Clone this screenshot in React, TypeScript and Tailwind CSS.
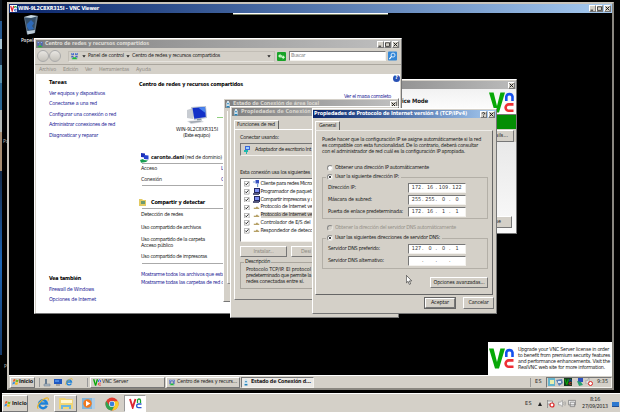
import { useLayoutEffect, useRef, type ReactNode } from "react";

/* One line of text; `w` is the width the line is tracked to fill. */
function T({ w, className = "", children }: { w?: number; className?: string; children: ReactNode }) {
  const ref = useRef<HTMLSpanElement>(null);
  useLayoutEffect(() => {
    const el = ref.current;
    if (!el || !w) return;
    el.style.letterSpacing = "0px";
    const n = (el.textContent || "").length;
    el.style.letterSpacing = `${(w - el.getBoundingClientRect().width) / n}px`;
  }, [w]);
  return (
    <span ref={ref} className={`block w-max shrink-0 whitespace-pre leading-[6px] ${className}`}>
      {children}
    </span>
  );
}

const raised = "border border-t-white border-l-white border-r-[#777] border-b-[#777] bg-[#d4d0c8]";
const sunken = "border border-t-[#777] border-l-[#777] border-r-[#f4f2ee] border-b-[#f4f2ee]";

function CapBtn({ kind }: { kind: "min" | "max" | "close" | "help" }) {
  return (
    <div className={`h-[7px] w-[7px] shrink-0 ${raised}`}>
      <svg viewBox="0 0 5 5" className="block h-[5px] w-[5px]" fill="none" stroke="#111" strokeWidth=".9">
        {kind === "min" && <path d="M.5 4.2h2.6" />}
        {kind === "max" && <path d="M.5.8h4v3.6h-4z" strokeWidth=".7" />}
        {kind === "close" && <path d="M.6.6l3.8 3.8M4.4.6L.6 4.4" />}
        {kind === "help" && <path d="M1.2 1.4C1.3.2 3.9.3 3.7 1.6 3.6 2.3 2.5 2.2 2.5 3.3M2.5 4v.8" />}
      </svg>
    </div>
  );
}

function VncLogo({ className }: { className: string }) {
  return (
    <svg viewBox="0 0 25 21" className={className} fill="none">
      <path d="M0 .5h4.600L8 14 11.400.5H16L10 20.500H6z" fill="#08a808" />
      <path d="M17.300 9V4.500a3.200 3.200 0 0 1 6.200 0V9" stroke="#1450ee" strokeWidth="2.600" />
      <path d="M24.500 12.400h-4.700a3.200 3.200 0 0 0 0 6.400h4.700" stroke="#ee2f35" strokeWidth="2.600" />
    </svg>
  );
}

function NetIcon({ className }: { className: string }) {
  return (
    <svg viewBox="0 0 7 7" className={className}>
      <path d="M.3.4h2.700v2.100H.3zM4 .4h2.700v2.100H4zM.3 3.300h2.200v1.600H.3zM4.400 3.300h2.200v1.600H4.400z" fill="#4260be" />
      <path d="M.8.8h1.500v1H.8zM4.500.8H6v1H4.500z" fill="#abc6f5" />
      <path d="M2 4.700h3v1h1.200v1H.8v-1H2z" fill="#1cb83e" />
    </svg>
  );
}

function Phone({ className }: { className: string }) {
  return (
    <svg viewBox="0 0 4 7" className={className}>
      <path d="M1 0h2v1.500h.7v4.800H.3V1.500H1z" fill="#cfe3ee" />
      <path d="M1.300 2h1.400v1.200H1.300zM.6 5h2.800v1.500H.6z" fill="#2683b8" />
    </svg>
  );
}

function Flag({ className }: { className: string }) {
  return (
    <svg viewBox="0 0 8 8" className={className}>
      <path d="M1.500 1.500Q3-.2 4 1L3.500 3.500Q2.500 2.700 1 4z" fill="#f15a24" />
      <path d="M4.500 1.200Q6 2.200 7.600 1L7 3.600Q5.500 4.500 4 3.600z" fill="#75b82c" />
      <path d="M.9 4.500Q2.200 3.400 3.400 4L2.900 6.500Q1.700 5.800.3 7z" fill="#3a8ed8" />
      <path d="M3.900 4.200Q5.400 5.200 6.900 4.200L6.300 6.800Q5 7.700 3.400 6.600z" fill="#f9bd16" />
    </svg>
  );
}

function IE({ className }: { className: string }) {
  return (
    <svg viewBox="0 0 14 14" className={className} fill="none">
      <path d="M11 9.500A4.300 4.300 0 1 1 11.300 7H4" stroke="#1f83d8" strokeWidth="2.500" />
      <path d="M2 12.500C-1 11 4 3.500 9 1.500c4-1.500 4.300.3 3.400 2.400" stroke="#ecb72c" strokeWidth="1.200" />
    </svg>
  );
}

function Computer({ className }: { className: string }) {
  return (
    <svg viewBox="0 0 22 18" className={className}>
      <path d="M1 4l6-2v11l-6-1z" fill="#c8ccd2" />
      <path d="M5 1l15-1 1 12-13 2z" fill="#b9c2cf" />
      <path d="M6.500 2l12.500-1 .8 10-11.500 1.700z" fill="#1230c8" />
      <path d="M12 1.500l7-.5.500 6z" fill="#4a84ee" />
      <path d="M11 13l4-.5 1 2-5 .5z" fill="#8894a4" />
      <path d="M1 15l14-1 3 2-13 2z" fill="#d3d7dc" />
      <path d="M3 15.500l11-.7 1.500 1L5 17z" fill="#a0a7b0" />
    </svg>
  );
}

function DownArrow({ className }: { className: string }) {
  return (
    <svg viewBox="0 0 4 3" className={`h-[3px] w-[4px] shrink-0 ${className}`}>
      <path d="M.3.200h3.400L2 2.500z" fill="#222" />
    </svg>
  );
}

function Radio({ on, off }: { on?: boolean; off?: boolean }) {
  return (
    <div
      className={`flex h-[6px] w-[6px] shrink-0 items-center justify-center rounded-full border border-t-[#888] border-l-[#888] border-r-[#e4e2dd] border-b-[#e4e2dd] ${off ? "bg-[#d4d0c8]" : "bg-white"}`}
    >
      {on && <div className="h-[2px] w-[2px] rounded-full bg-black" />}
    </div>
  );
}

function IpField({ parts }: { parts: string[] }) {
  return (
    <div className={`flex h-[10px] w-[58px] items-center bg-white pl-[2px] text-[5.400px] text-[#333] ${sunken}`}>
      {parts.map((p, i) => (
        <div key={i} className="flex w-[14px] items-center">
          <span className="w-[11px] text-center leading-[6px]">{p}</span>
          {i < 3 && <span className="leading-[6px]">.</span>}
        </div>
      ))}
    </div>
  );
}

function IpRow({ label, w, parts }: { label: string; w: number; parts: string[] }) {
  return (
    <div className="flex h-[12px] items-center justify-between pl-[5px] pr-[21px]">
      <T w={w}>{label}</T>
      <IpField parts={parts} />
    </div>
  );
}

function NetworkCenter() {
  return (
    <div className={`absolute left-[34px] top-[38px] flex h-[276px] w-[368px] flex-col ${raised}`}>
      <div className="mx-[1px] mt-[1px] flex h-[8px] shrink-0 items-center bg-linear-to-r from-[#808080] to-[#c0c0c0] pl-[1px] pr-[1px]">
        <NetIcon className="mr-[2px] h-[7px] w-[6px]" />
        <T w={104} className="font-bold text-[#dedbd5]">Centro de redes y recursos compartidos</T>
        <div className="ml-auto flex">
          <CapBtn kind="min" />
          <CapBtn kind="max" />
          <div className="w-[1px]" />
          <CapBtn kind="close" />
        </div>
      </div>
      <div className="flex h-[17px] shrink-0 items-center border-b border-[#aaa69e] pl-[2px] pr-[2px]">
        <div className="h-[12px] w-[12px] shrink-0 rounded-full border border-[#aaa] bg-linear-to-b from-[#e8e6e2] to-[#c4c1ba]" />
        <div className="h-[12px] w-[12px] shrink-0 rounded-full border border-[#aaa] bg-linear-to-b from-[#e8e6e2] to-[#c4c1ba]" />
        <div className="ml-[7px] flex h-[11px] w-[207px] shrink-0 items-center border border-[#c2beb6] border-b-[#e6e4df]">
          <NetIcon className="ml-[2px] mr-[4px] h-[8px] w-[7px] shrink-0" />
          <DownArrow className="mr-[2px]" />
          <T w={36}>Panel de control</T>
          <DownArrow className="mx-[2px]" />
          <T w={88}>Centro de redes y recursos compartidos</T>
          <DownArrow className="ml-auto mr-[3px]" />
        </div>
        <svg viewBox="0 0 9 9" className="ml-[2px] h-[9px] w-[9px] shrink-0">
          <rect width="9" height="9" rx="1" fill="#18a328" />
          <path d="M1 4L3.500 1.700v1.500H5v1.600H3.500v1.500zM8 5.200L5.700 7.500V6H4.500V4.500h1.200V3z" fill="#cff8ca" />
        </svg>
        <div className={`ml-[3px] flex h-[10px] w-[97px] shrink-0 items-center bg-white pl-[1px] ${sunken}`}>
          <T w={14} className="text-[#888]">Buscar</T>
        </div>
        <svg viewBox="0 0 10 10" className="ml-[2px] h-[10px] w-[9px] shrink-0">
          <rect width="10" height="10" rx="1" fill="#3587d6" />
          <circle cx="5.600" cy="4" r="2.200" fill="none" stroke="#e4f2ff" />
          <path d="M4 5.500L1.500 8.500" stroke="#fff" strokeWidth="1.300" />
        </svg>
      </div>
      <div className="flex h-[9px] shrink-0 items-center pl-[4px] text-[#918d86]">
        <T w={17} className="mr-[7px]">Archivo</T>
        <T w={15} className="mr-[7px]">Edición</T>
        <T w={7} className="mr-[7px]">Ver</T>
        <T w={30} className="mr-[7px]">Herramientas</T>
        <T w={15}>Ayuda</T>
      </div>
      <div className="mx-[1px] flex min-h-0 flex-1 overflow-hidden bg-white">
        <div className="w-[103px] shrink-0 pl-[13px] pt-[6px] text-[#242496]">
          <T w={18} className="mb-[4.500px] font-bold text-black">Tareas</T>
          <T w={56} className="mb-[4.600px]">Ver equipos y dispositivos</T>
          <T w={48} className="mb-[4.600px]">Conectarse a una red</T>
          <T w={67} className="mb-[4.600px]">Configurar una conexión o red</T>
          <T w={66} className="mb-[4.600px]">Administrar conexiones de red</T>
          <T w={49}>Diagnosticar y reparar</T>
          <T w={32} className="mt-[137px] font-bold text-black">Vea también</T>
          <T w={45} className="mt-[5px]">Firewall de Windows</T>
          <T w={47} className="mt-[4.500px]">Opciones de Internet</T>
        </div>
        <div className="w-[262px] shrink-0">
          <div className="flex h-[7px] justify-end pt-[1px]">
            <div className="mr-[1px] h-[7px] w-[7px] shrink-0 rounded-full bg-[#2851b5] text-center text-[5.500px] font-bold leading-[7px] text-white">?</div>
          </div>
          <T w={104} className="mt-[1px] font-bold text-black">Centro de redes y recursos compartidos</T>
          <T w={47} className="ml-[205px] mt-[6px] text-[#242496]">Ver el mapa completo</T>
          <div className="flex items-center pl-[47px] pt-[6px]">
            <Computer className="h-[18px] w-[22px]" />
            <div className="ml-[9px] mt-[5px] h-[1px] w-[30px] bg-[#91cf80]" />
          </div>
          <T w={42} className="ml-[37px] mt-[2.500px]">WIN-9L2C8XR315I</T>
          <T w={27} className="ml-[44px] mt-[0.500px]">(Este equipo)</T>
          <div className="mt-[13px] flex h-[11px] items-center">
            <svg viewBox="0 0 10 10" className="h-[10px] w-[10px]">
              <path d="M2 0l4 .5v4L2 4z" fill="#1a2fb8" />
              <path d="M5 2l4.500.5v4L5 6z" fill="#2443d0" />
              <path d="M1 7l3-1 1 1 4 .5-2 1.500-5 .7z" fill="#189d50" />
            </svg>
            <T w={33} className="ml-[2px] font-bold">caronte.dani</T>
            <T w={37} className="ml-[1px]">(red de dominio)</T>
          </div>
          <div className="ml-[3px] h-[1px] bg-[#aaa]" />
          <div className="ml-[2px] mt-[2px] flex">
            <div className="w-[80px]"><T w={16}>Acceso</T></div>
            <T w={38} className="text-[#242496]">Local e Internet</T>
          </div>
          <div className="ml-[2px] mt-[5px] flex">
            <div className="w-[80px]"><T w={21}>Conexión</T></div>
            <T w={21} className="text-[#242496]">Conexión</T>
          </div>
          <div className="ml-[3px] mt-[2px] h-[1px] bg-[#aaa]" />
          <div className="mt-[11px] flex h-[11px] items-center">
            <svg viewBox="0 0 7 8" className="mb-[2px] h-[8px] w-[7px]">
              <path d="M0 1h3l1 1h3v6H0z" fill="#e3ca62" />
              <path d="M2 3h4v3H2z" fill="#6d9b70" />
            </svg>
            <T w={54} className="ml-[5px] mt-[1px] font-bold text-black">Compartir y detectar</T>
          </div>
          <div className="ml-[3px] h-[1px] bg-[#aaa]" />
          <div className="ml-[2px]">
            <T w={42} className="mt-[3px]">Detección de redes</T>
            <T w={60} className="mt-[6.500px]">Uso compartido de archivos</T>
            <T w={64} className="mt-[6.500px]">Uso compartido de la carpeta</T>
            <T w={32}>Acceso público</T>
            <T w={66} className="mt-[4.500px]">Uso compartido de impresoras</T>
          </div>
          <div className="ml-[3px] mt-[3.500px] h-[1px] bg-[#aaa]" />
          <T w={86} className="ml-[2px] mt-[8px] text-[#242496]">Mostrarme todos los archivos que estoy</T>
          <T w={97} className="ml-[2px] mt-[2.300px] text-[#242496]">Mostrarme todas las carpetas de red compar</T>
        </div>
      </div>
    </div>
  );
}

function VncServerWindow() {
  return (
    <div className={`absolute left-[340px] top-[79px] flex h-[155px] w-[177px] flex-col ${raised}`}>
      <div className="mt-[1px] flex h-[8px] shrink-0 items-center justify-end bg-linear-to-r from-[#808080] to-[#bbb] pr-[1px]">
        <CapBtn kind="close" />
      </div>
      <div className="flex h-[25px] shrink-0 items-start justify-between bg-linear-to-b from-[#f2f2f2] to-white pl-[48px] pr-[2px] pt-[3px]">
        <T w={39} className="mt-[7px] text-[6px] font-bold">Service Mode</T>
        <VncLogo className="h-[21px] w-[25px]" />
      </div>
      <div className="h-[15px] shrink-0 border-t border-[#777] bg-[#048e04]" />
      <div className="flex h-[13px] shrink-0 justify-end pr-[2px] pt-[1px]">
        <div className={`flex h-[12px] w-[34px] items-center justify-end pr-[5px] ${raised}`}><T>Details...</T></div>
      </div>
      <div className="flex flex-1 items-end justify-end bg-linear-to-b from-[#e9e9e9] to-[#fafafa] pb-[5px] pr-[4px]">
        <div className={`flex h-[12px] w-[34px] items-center justify-end pr-[10px] ${raised}`}><T>Close</T></div>
      </div>
    </div>
  );
}

function StatusWindow() {
  return (
    <div className={`absolute left-[223px] top-[98px] flex h-[204px] w-[176px] flex-col ${raised}`}>
      <div className="mx-[1px] mt-[1px] flex h-[8px] shrink-0 items-center bg-linear-to-r from-[#808080] to-[#c0c0c0] pl-[1px]">
        <Phone className="mr-[3px] h-[7px] w-[4px]" />
        <T w={86} className="font-bold text-[#d8d5ce]">Estado de Conexión de área local</T>
        <div className="ml-auto"><CapBtn kind="close" /></div>
      </div>
      <div className="mb-[17px] ml-[3px] mt-[3px] flex-1 border-b border-l border-b-[#888] border-l-white" />
    </div>
  );
}

const components: { label: string; w: number; kind: "client" | "pc" | "proto"; sel?: boolean }[] = [
  { label: "Cliente para redes Micros", w: 53, kind: "client" },
  { label: "Programador de paquet", w: 51, kind: "pc" },
  { label: "Compartir impresoras y a", w: 53, kind: "pc" },
  { label: "Protocolo de Internet ve", w: 52, kind: "proto" },
  { label: "Protocolo de Internet ve", w: 52, kind: "proto", sel: true },
  { label: "Controlador de E/S del", w: 50, kind: "proto" },
  { label: "Respondedor de detecc", w: 52, kind: "proto" },
];

function ItemIcon({ kind }: { kind: "client" | "pc" | "proto" }) {
  return (
    <svg viewBox="0 0 7 7" className="ml-[3px] mr-[1px] h-[7px] w-[7px] shrink-0">
      {kind === "client" && (
        <>
          <path d="M2.500 0h3.500v3.500H2.500z" fill="#344fc0" />
          <path d="M0 1.500h2v1H0zM4 4h1.200v3H4z" fill="#77a0d0" />
        </>
      )}
      {kind === "pc" && (
        <>
          <path d="M1 0h6v6H1z" fill="#24285e" />
          <path d="M2 1h4v3H2z" fill="#7b8cf0" />
          <path d="M0 5h6v2H0z" fill="#57597d" />
        </>
      )}
      {kind === "proto" && <path d="M.8 4.800h5.400v-1H4.600V2.700H3.300v1.100H.8z" fill="#a08438" />}
    </svg>
  );
}

function ConnectionProps() {
  return (
    <div className={`absolute left-[230px] top-[106px] flex h-[212px] w-[169px] flex-col overflow-hidden ${raised}`}>
      <div className="mx-[1px] mt-[1px] flex h-[8px] shrink-0 items-center bg-linear-to-r from-[#808080] to-[#c0c0c0] pl-[2px]">
        <Phone className="mr-[3px] h-[7px] w-[4px]" />
        <T w={75} className="font-bold text-[#d8d5ce]">Propiedades de Conexión d</T>
      </div>
      <div className="ml-[3px] mt-[4px] flex h-[9px] w-[45px] shrink-0 items-center rounded-t-[1px] border-l border-r border-t border-l-white border-r-[#666] border-t-white pl-[2px]">
        <T w={38}>Funciones de red</T>
      </div>
      <div className="ml-[3px] mr-[3px] h-[171px] shrink-0 border-b border-l border-t border-b-[#777] border-l-white border-t-white pl-[5px] pt-[5px]">
        <T w={39}>Conectar usando:</T>
        <div className={`mt-[2px] flex h-[13px] w-[150px] items-center pl-[3px] ${sunken}`}>
          <svg viewBox="0 0 7 8" className="mr-[4px] h-[8px] w-[7px]">
            <path d="M1 0h5v4H1z" fill="#3c68d8" />
            <path d="M2 1h3v2H2z" fill="#99d0ff" />
            <path d="M0 4h4v2H3v2H2V6H0z" fill="#1fb8ac" />
          </svg>
          <T w={56}>Adaptador de escritorio Int</T>
        </div>
        <T w={70} className="mt-[14px]">Esta conexión usa los siguientes</T>
        <div className={`mt-[2px] h-[64px] w-[150px] bg-white pl-[3px] pt-[1px] ${sunken}`}>
          {components.map((c, i) => (
            <div key={i} className="flex h-[7.850px] items-center">
              <svg viewBox="0 0 6 6" className="h-[5.500px] w-[5.500px] shrink-0">
                <path d="M.4.400h5.200v5.200H.4z" fill="#fff" stroke="#888" strokeWidth=".7" />
                <path d="M1.300 2.800l1.200 1.300L4.800 1.500" fill="none" stroke="#111" strokeWidth="1" />
              </svg>
              <ItemIcon kind={c.kind} />
              <div className={c.sel ? "bg-[#d4d0c8]" : ""}><T w={c.w}>{c.label}</T></div>
            </div>
          ))}
        </div>
        <div className="mt-[4px] flex gap-[4px] text-[#8d8981]">
          <div className={`flex h-[11px] w-[47px] items-center justify-center ${raised}`}><T w={20}>Instalar...</T></div>
          <div className={`flex h-[11px] w-[47px] items-center pl-[9px] ${raised}`}><T w={10}>Desi</T></div>
        </div>
        <fieldset className="mt-[2px] h-[30px] w-[150px] border border-[#aaa69e] pl-[5px]">
          <legend className="ml-[-2px] px-[1px]"><T w={25}>Descripción</T></legend>
          <T w={65} className="mt-[1.500px]">Protocolo TCP/IP. El protocol</T>
          <T w={65}>predeterminado que permite la</T>
          <T w={58}>redes conectadas entre sí.</T>
        </fieldset>
      </div>
    </div>
  );
}

function IpProps() {
  return (
    <div className={`absolute left-[312px] top-[108px] flex h-[206px] w-[185px] flex-col ${raised}`}>
      <div className="mt-[1px] flex h-[8px] shrink-0 items-center bg-linear-to-r from-[#0a246a] to-[#a6caf0] pl-[1px] pr-[1px]">
        <T w={153} className="font-bold text-white">Propiedades de Protocolo de Internet versión 4 (TCP/IPv4)</T>
        <div className="ml-auto flex gap-[1px]"><CapBtn kind="help" /><CapBtn kind="close" /></div>
      </div>
      <div className="ml-[2px] mt-[3px] flex h-[9px] w-[25px] shrink-0 items-center rounded-t-[1px] border-l border-r border-t border-l-white border-r-[#666] border-t-white pl-[3px]">
        <T w={17}>General</T>
      </div>
      <div className="ml-[2px] mr-[3px] h-[165px] shrink-0 border border-b-[#666] border-l-white border-r-[#666] border-t-[#eeece8] pl-[6px] pr-[4px] pt-[6px]">
        <T w={159}>Puede hacer que la configuración IP se asigne automáticamente si la red</T>
        <T w={156}>es compatible con esta funcionalidad. De lo contrario, deberá consultar</T>
        <T w={143}>con el administrador de red cuál es la configuración IP apropiada.</T>
        <div className="mt-[10px] flex items-center gap-[2px] pl-[5px]"><Radio /><T w={94}>Obtener una dirección IP automáticamente</T></div>
        <fieldset className="mt-[3px] h-[45px] border border-[#b3afa7]">
          <legend className="ml-[3px] flex items-center gap-[2px] pl-[1px] pr-[2px]"><Radio on /><T w={64}>Usar la siguiente dirección IP:</T></legend>
          <div className="pt-[2px]">
            <IpRow label="Dirección IP:" w={28} parts={["172", "16", "109", "122"]} />
            <IpRow label="Máscara de subred:" w={44} parts={["255", "255", "0", "0"]} />
            <IpRow label="Puerta de enlace predeterminada:" w={75} parts={["172", "16", "1", "1"]} />
          </div>
        </fieldset>
        <div className="mt-[6px] flex items-center gap-[2px] pl-[5px] text-[#96928a]"><Radio off /><T w={121}>Obtener la dirección del servidor DNS automáticamente</T></div>
        <fieldset className="mt-[4px] h-[34px] border border-[#b3afa7]">
          <legend className="ml-[3px] flex items-center gap-[2px] pl-[1px] pr-[2px]"><Radio on /><T w={105}>Usar las siguientes direcciones de servidor DNS:</T></legend>
          <div className="pt-[2px]">
            <IpRow label="Servidor DNS preferido:" w={52} parts={["127", "0", "0", "1"]} />
            <IpRow label="Servidor DNS alternativo:" w={56} parts={["", "", "", ""]} />
          </div>
        </fieldset>
        <div className="mt-[8px] flex justify-end">
          <div className={`flex h-[11px] w-[58px] items-center justify-center ${raised}`}><T w={51}>Opciones avanzadas...</T></div>
        </div>
      </div>
      <div className="mr-[2px] mt-[2px] flex justify-end gap-[7px]">
        <div className="h-[12px] w-[32px] border border-[#666]"><div className={`flex h-[10px] items-center justify-center ${raised}`}><T w={18}>Aceptar</T></div></div>
        <div className={`flex h-[12px] w-[31px] items-center justify-center ${raised}`}><T w={20}>Cancelar</T></div>
      </div>
    </div>
  );
}

function GuestTaskbar() {
  return (
    <div className="flex h-[13px] shrink-0 items-center border-t border-white bg-[#d4d0c8]">
      <div className={`ml-[1px] flex h-[11px] w-[25px] items-center pl-[1px] ${raised}`}>
        <Flag className="h-[8px] w-[7px]" />
        <T w={14} className="font-bold">Inicio</T>
      </div>
      <div className="ml-[4px] h-[9px] w-[1px] bg-[#999]" />
      <svg viewBox="0 0 8 9" className="ml-[3px] h-[9px] w-[8px]">
        <path d="M2 1h2v5H2z" fill="#667c92" />
        <path d="M1 6h6v2H1z" fill="#aab9c5" stroke="#6d7a89" strokeWidth=".5" />
      </svg>
      <svg viewBox="0 0 8 8" className="ml-[3px] h-[8px] w-[8px]">
        <path d="M0 1h8v5H0z" fill="#2058c0" />
        <path d="M1 2h4v2H1z" fill="#4988e4" />
        <path d="M2 6.500h4v1H2z" fill="#777" />
      </svg>
      <IE className="ml-[3px] h-[8px] w-[8px]" />
      <div className="ml-[14px] h-[9px] w-[1px] bg-[#999]" />
      <div className={`ml-[2px] flex h-[11px] w-[75px] items-center pl-[2px] ${raised}`}>
        <VncLogo className="mr-[1px] h-[7px] w-[8px]" />
        <T w={26}>VNC Server</T>
      </div>
      <div className={`ml-[1px] flex h-[11px] w-[74px] items-center pl-[2px] ${raised}`}>
        <NetIcon className="mr-[2px] h-[7px] w-[6px]" />
        <T w={60}>Centro de redes y recurs...</T>
      </div>
      <div className={`ml-[1px] flex h-[11px] w-[73px] items-center bg-[#ebe9e5] pl-[2px] ${sunken}`}>
        <Phone className="mr-[3px] h-[7px] w-[4px]" />
        <T w={60} className="font-bold">Estado de Conexión d...</T>
      </div>
      <div className="ml-auto h-[9px] w-[1px] bg-[#999]" />
      <T w={7} className="mx-[4px]">ES</T>
      <div className={`flex h-[11px] w-[66px] items-center gap-[1px] pl-[1px] ${sunken}`}>
        <svg viewBox="0 0 7 8" className="h-[8px] w-[7px]">
          <path d="M0 0h7v8H0z" fill="#66b4cc" />
          <path d="M2 2h4v4H2z" fill="#e9efad" />
        </svg>
        <svg viewBox="0 0 7 8" className="h-[8px] w-[7px]">
          <path d="M0 2l6-1 1 4-4 3z" fill="#6183b6" />
          <path d="M2 3h3v2H2z" fill="#dde8f5" />
        </svg>
        <div className="flex h-[8px] w-[8px] items-center bg-[#173a20]"><VncLogo className="h-[6px] w-[8px]" /></div>
        <svg viewBox="0 0 7 8" className="ml-[4px] h-[8px] w-[7px]">
          <path d="M1 0h5v4H1z" fill="#2d52bf" />
          <path d="M0 3l4 1 2 3-4 1z" fill="#28a06e" />
        </svg>
        <svg viewBox="0 0 8 8" className="h-[8px] w-[8px]">
          <path d="M0 3h2l2-3v7L2 5H0z" fill="#e8e8e8" stroke="#888" strokeWidth=".5" />
          <circle cx="5.500" cy="5.500" r="2" fill="#fff" stroke="#dc2525" />
        </svg>
        <T w={11} className="ml-[3px]">9:35</T>
      </div>
    </div>
  );
}

function HostTaskbar() {
  return (
    <div className="absolute left-[2px] top-[393px] flex h-[19px] w-[618px] items-center border-t border-white bg-[#d4d0c8] pt-[1px]">
      <div className={`flex h-[17px] w-[26px] shrink-0 items-center pl-[1px] ${raised}`}>
        <Flag className="h-[8px] w-[7px]" />
        <T w={15} className="ml-[1px] font-bold">Inicio</T>
      </div>
      <IE className="ml-[8px] h-[13px] w-[14px] shrink-0" />
      <div className={`ml-[4px] flex h-[17px] w-[23px] shrink-0 items-center justify-center ${raised}`}>
        <svg viewBox="0 0 16 13" className="h-[13px] w-[16px]">
          <path d="M1 1h6l1 1h7v10H1z" fill="#f2d675" />
          <path d="M3 3h11v3H3z" fill="#fff6cf" />
          <path d="M3 12V8h10v4h-2v-2H5v2z" fill="#6cb5df" />
        </svg>
      </div>
      <svg viewBox="0 0 13 13" className="ml-[5px] h-[13px] w-[13px] shrink-0">
        <path d="M3 1h10v11H3z" fill="#b0cee6" />
        <path d="M0 1h10v11H0z" fill="#80b5db" />
        <circle cx="5.500" cy="6.500" r="4.200" fill="#f2781c" />
        <path d="M4 3.800l4.300 2.700L4 9.200z" fill="#fff" />
      </svg>
      <svg viewBox="0 0 14 14" className="ml-[10px] h-[14px] w-[14px] shrink-0">
        <circle cx="7" cy="7" r="6.500" fill="#e13d30" />
        <path d="M1.200 4A6.500 6.500 0 0 0 7 13.500L9.800 8.500 4 8z" fill="#31a350" />
        <path d="M7 13.500A6.500 6.500 0 0 0 13 4.200H7.500L9.800 8.500z" fill="#f8cd2a" />
        <circle cx="7" cy="7" r="3" fill="#fff" />
        <circle cx="7" cy="7" r="2.400" fill="#3880dc" />
      </svg>
      <div className="ml-[5px] flex h-[17px] w-[22px] shrink-0 items-center justify-center border border-[#999] border-r-white border-b-white bg-white">
        <svg viewBox="0 0 13 11" className="h-[11px] w-[13px]" fill="none">
          <path d="M1 1l2.700 8.500L6.500 1" stroke="#dd2632" strokeWidth="1.900" />
          <path d="M8.500 5V2.500a1.500 1.500 0 0 1 3 0V5" stroke="#18a331" strokeWidth="1.300" />
          <path d="M12.500 6h-3a1.800 1.800 0 0 0 0 3.700h3" stroke="#2757d0" strokeWidth="1.300" />
        </svg>
      </div>
      <T w={7} className="ml-[379px]">ES</T>
      <svg viewBox="0 0 4 4" className="ml-[6px] h-[4px] w-[4px] shrink-0"><path d="M0 4l2-4 2 4z" fill="#222" /></svg>
      <svg viewBox="0 0 8 9" className="ml-[5px] h-[9px] w-[8px] shrink-0">
        <path d="M.5 1v8M.5 2h5v3h-5" stroke="#888" fill="#eee" strokeWidth=".8" />
        <circle cx="5" cy="6" r="2" fill="#fff" stroke="#dc2525" strokeWidth="1.200" />
      </svg>
      <svg viewBox="0 0 9 9" className="ml-[3px] h-[9px] w-[8px] shrink-0" fill="none" stroke="#999" strokeWidth=".8">
        <path d="M.5 3h2L5 1v7L2.500 6h-2z" fill="#f4f4f4" />
        <path d="M6.300 3q1 1.500 0 3M7.700 2q1.500 2.500 0 5" />
      </svg>
      <svg viewBox="0 0 9 9" className="ml-[2px] h-[9px] w-[8px] shrink-0" fill="#eee" stroke="#777" strokeWidth=".8">
        <path d="M.5 1h8v5h-8zM2.500 3h5v5h-5z" />
      </svg>
      <div className="ml-[6px] flex w-[26px] shrink-0 flex-col items-center gap-[1.500px]"><T w={10}>8:16</T><T w={26}>27/09/2013</T></div>
      <div className="ml-[4px] mt-[1px] h-[5px] w-[7px] shrink-0 border-b border-[#234d8f] bg-[#2c78d0]" />
    </div>
  );
}

export default function App() {
  return (
    <div className="relative h-[412px] w-[620px] overflow-hidden bg-black font-['DejaVu_Sans_Condensed','DejaVu_Sans',sans-serif] text-[5.400px] text-[#222] [font-stretch:condensed] [text-rendering:geometricPrecision]">
      <div className="flex h-[355px] w-[2px] flex-col">
        <div className="h-[21px] bg-[#101820]" />
        <div className="h-[18px] bg-[#285a91]" />
        <div className="h-[10px] bg-[#a8c5d4]" />
        <div className="h-[16px] bg-[#1d3854]" />
        <div className="h-[18px] bg-[#5d93ae]" />
        <div className="h-[27px] bg-[#2c6691]" />
        <div className="h-[22px] bg-[#b2b8b5]" />
        <div className="h-[39px] bg-[#a78c71]" />
        <div className="flex-1 bg-linear-to-b from-[#142b4c] via-[#1e66b5] to-[#163a6a]" />
      </div>
      <T className="absolute left-[3px] top-[139px] text-[#aaa]">Pa</T>
      <T className="absolute left-[4px] top-[364px] text-[#aaa]">P</T>

      <div className="absolute left-[7px] top-[2px] flex h-[388px] w-[607px] flex-col border-2 border-l-[#c8c4bc] border-t-[#c8c4bc] border-r-[#8a8780] border-b-[#8a8780] bg-black">
        <div className="flex h-[9px] shrink-0 items-center bg-linear-to-r from-[#0a246a] to-[#a6caf0] pl-[1px] pr-[1px]">
          <div className="mr-[1px] flex h-[7px] w-[7px] items-center justify-center bg-white">
            <svg viewBox="0 0 7 7" className="h-[7px] w-[7px]" fill="none">
              <path d="M.7 1l1.500 5L3.700 1" stroke="#dd2632" strokeWidth="1.200" />
              <path d="M4.700 3V1.500h1.500V3" stroke="#18a331" strokeWidth=".9" />
              <path d="M6.700 4.300h-2V6h2" stroke="#2757d0" strokeWidth=".9" />
            </svg>
          </div>
          <T w={81} className="font-bold text-white">WIN-9L2C8XR315I - VNC Viewer</T>
          <div className="ml-auto flex"><CapBtn kind="min" /><CapBtn kind="max" /><div className="w-[1px]" /><CapBtn kind="close" /></div>
        </div>
        <div className="ml-[224px] h-[2px] w-[155px] shrink-0 border-b border-[#7a8063] bg-white" />
        <div className="ml-[11px] flex w-[22px] flex-1 flex-col items-center">
          <svg viewBox="0 0 16 20" className="h-[20px] w-[16px]">
            <path d="M1 2l14-1-3 17-8 1.500z" fill="#5e7387" />
            <path d="M2 3l11-1-2 14-6 1z" fill="#344e68" />
            <path d="M1 2l7 1 7-2-7-1z" fill="#c7d9e4" />
            <path d="M4 9l4-4 3 3-2 3 2 3-5 1-2-3z" fill="#2d69b8" />
            <path d="M4 16l8-1-.5 3-7 1.500z" fill="#bdcbd7" />
          </svg>
          <T w={20} className="mt-[3px] text-white">Papelera</T>
        </div>
        <GuestTaskbar />
      </div>

      <VncServerWindow />
      <NetworkCenter />
      <StatusWindow />
      <ConnectionProps />
      <IpProps />

      <div className="absolute left-[488px] top-[342px] flex h-[33px] w-[124px] items-center bg-white pl-[1px]">
        <VncLogo className="h-[21px] w-[25px]" />
        <div className="ml-[4px] text-[#222]">
          <T w={91}>Upgrade your VNC Server license in order</T>
          <T w={92}>to benefit from premium security features</T>
          <T w={92}>and performance enhancements. Visit the</T>
          <T w={87}>RealVNC web site for more information.</T>
        </div>
      </div>
      <svg viewBox="0 0 7 10" className="absolute left-[406px] top-[275px] h-[10px] w-[7px]">
        <path d="M.4.400v7.400l1.700-1.500L3.300 9.400l1.300-.6-1.200-2.900h2.300z" fill="#fff" stroke="#222" strokeWidth=".6" />
      </svg>
      <HostTaskbar />
    </div>
  );
}
